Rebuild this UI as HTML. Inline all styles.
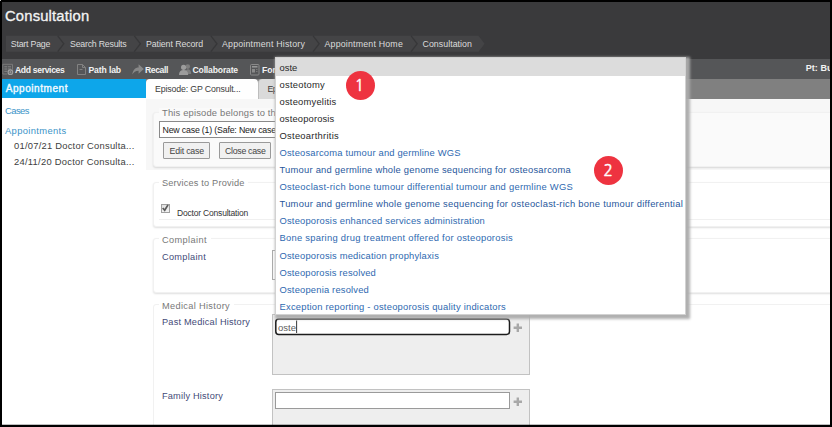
<!DOCTYPE html>
<html><head><meta charset="utf-8"><title>Consultation</title>
<style>
html,body{margin:0;padding:0;background:#000;}
body{width:832px;height:427px;position:relative;overflow:hidden;font-family:"Liberation Sans",sans-serif;}
.a{position:absolute;box-sizing:border-box;}
.t{position:absolute;white-space:nowrap;line-height:1;}
.n{font-family:"NanumGothic","Liberation Sans",sans-serif;font-size:15.400px;color:#fff;-webkit-text-stroke:0.450px #fff;}
</style></head><body>
<!-- page -->
<div class="a" style="left:2px;top:2px;width:828px;height:423px;background:#fff;overflow:hidden"></div>
<div class="a" style="left:2px;top:2px;width:828px;height:56.6px;background:#3a3a3c"></div>
<div class="a" style="left:2px;top:58.6px;width:828px;height:20px;background:#555658"></div>
<div class="a" style="left:146px;top:78.6px;width:684px;height:20px;background:#808080"></div>
<div class="a" style="left:2px;top:78.6px;width:144px;height:19.2px;background:#0da6ea"></div>
<!-- content bg -->
<div class="a" style="left:146px;top:98.6px;width:684px;height:71px;background:#f7f7f7"></div>
<!-- crumbs -->
<svg class="a" style="left:0;top:0" width="832" height="60">
<polygon points="6,35.800 478.500,35.800 484.600,43.750 478.500,51.700 6,51.700" fill="#444446"/>
<g fill="none" stroke="#373739" stroke-width="1.300"><polyline points="57.7,35.800 63.8,43.750 57.7,51.700"/><polyline points="134.3,35.800 140.4,43.750 134.3,51.700"/><polyline points="210.9,35.800 217.0,43.750 210.9,51.700"/><polyline points="313.1,35.800 319.2,43.750 313.1,51.700"/><polyline points="411.1,35.800 417.2,43.750 411.1,51.700"/></g></svg>
<!-- tabs -->
<div class="a" style="left:146px;top:78.6px;width:112px;height:20px;background:#fefefe;border-radius:4px 4px 0 0"></div>
<div class="a" style="left:258px;top:78.6px;width:112px;height:20px;background:#dadada;border-left:1px solid #bdbdbd;border-radius:4px 4px 0 0"></div>
<!-- fieldsets -->
<div class="a" style="left:152.8px;top:112px;width:700px;height:54.5px;border:1px solid #f1f1f1;border-radius:3px;box-shadow:0 1px 2px rgba(0,0,0,.13);background:#fafafa"></div>
<div class="a" style="left:159px;top:108px;width:120px;height:9px;background:#fafafa"></div>
<div class="a" style="left:152.8px;top:182px;width:700px;height:44.5px;border:1px solid #f1f1f1;border-radius:3px;box-shadow:0 1px 2px rgba(0,0,0,.13);background:#fff"></div>
<div class="a" style="left:159px;top:178px;width:89px;height:9px;background:#fff"></div>
<div class="a" style="left:159px;top:219px;width:680px;height:1px;background:#f0f0f0"></div>
<div class="a" style="left:152.8px;top:238px;width:700px;height:54.5px;border:1px solid #f1f1f1;border-radius:3px;box-shadow:0 1px 2px rgba(0,0,0,.13);background:#fff"></div>
<div class="a" style="left:159px;top:234px;width:52px;height:9px;background:#fff"></div>
<div class="a" style="left:152.8px;top:304px;width:700px;height:140px;border:1px solid #f1f1f1;border-radius:3px;background:#fff"></div>
<div class="a" style="left:159px;top:300px;width:75px;height:9px;background:#fff"></div>
<!-- select + buttons -->
<div class="a" style="left:159px;top:121.4px;width:200px;height:16.600px;border:1px solid #8a8a8a;background:#fff"></div>
<div class="a" style="left:163px;top:142.3px;width:46.6px;height:16.7px;border:1px solid #9a9a9a;background:#f1f1f1;border-radius:1px"></div>
<div class="a" style="left:219.2px;top:142.3px;width:51.6px;height:16.7px;border:1px solid #9a9a9a;background:#f1f1f1;border-radius:1px"></div>
<!-- checkbox -->
<div class="a" style="left:160.5px;top:203.6px;width:9.6px;height:9.2px;border:1px solid #a0a0a0;background:linear-gradient(#e2e2e2,#f2f2f2)"></div>
<svg class="a" style="left:160.3px;top:203.5px" width="10" height="10"><path d="M2.700 4 L4.700 6.300 L8 0.900" fill="none" stroke="#5a5a5a" stroke-width="1.700"/></svg>
<!-- complaint textarea -->
<div class="a" style="left:272px;top:250px;width:200px;height:29.600px;border:1px solid #aaa;background:#fff"></div>
<!-- medical history boxes -->
<div class="a" style="left:272px;top:314px;width:258px;height:61px;border:1px solid #c2c2c2;background:#eeeeee"></div>
<svg class="a" style="left:270px;top:314px" width="250" height="26"><rect x="5.800" y="5" width="233.700" height="15.400" rx="3" fill="#fff" stroke="#1c1c1c" stroke-width="1.500"/><rect x="26.200" y="6.500" width="0.900" height="12.500" fill="#222"/></svg>
<div class="a" style="left:272px;top:389px;width:258px;height:60px;border:1px solid #c2c2c2;background:#eeeeee"></div>
<div class="a" style="left:275px;top:392.300px;width:235px;height:16.400px;border:1px solid #9a9a9a;background:#fff"></div>
<svg class="a" style="left:513px;top:323px" width="10" height="10"><path d="M3.6 0.6h2.4v3h3v2.4h-3v3h-2.4v-3h-3v-2.4h3z" fill="#a8a8a8"/></svg>
<svg class="a" style="left:513px;top:397px" width="10" height="10"><path d="M3.6 0.6h2.4v3h3v2.4h-3v3h-2.4v-3h-3v-2.4h3z" fill="#a8a8a8"/></svg>
<!-- toolbar icons -->
<svg class="a" style="left:0;top:58px" width="280" height="22" fill="none" stroke="#8e8e8e" stroke-width="1">
<path d="M2.800 6.300h9.700v5.500 M2.800 6.300v9.700h4.500" stroke="#7a7a7a"/><path d="M4.300 8.800h6.700 M4.300 11h6.700 M4.300 13.300h3.500" stroke="#858585" stroke-dasharray="3 0.700"/>
<circle cx="10.400" cy="14.200" r="2.300" stroke-width="1.100" stroke="#a0a0a0" fill="#606163"/><path d="M9.200 14.200h2.400 M10.400 13v2.400" stroke="#9a9a9a" stroke-width="0.800"/>
<path d="M77.500 6.500h5l3 3v7h-8z M82.500 6.500v3h3 M79.500 11.500h3" stroke="#828282"/>
<path d="M132.300 16.600C132.800 12 135 9.400 138.600 9.400V6.300L143.800 11L138.600 15.700V12.700C135.600 12.700 133.600 14 132.300 16.600Z" fill="#888888" stroke="none"/>
<g stroke="none"><circle cx="187.800" cy="8.600" r="2.300" fill="#7e7e7e"/><path d="M185 16c0-3 1-4.800 3-4.800s3.200 1.800 3.200 4.800z" fill="#7e7e7e"/><circle cx="183.600" cy="9.300" r="2.600" fill="#9c9c9c"/><path d="M179 17c0-3.400 1.600-5 4.600-5s4.600 1.600 4.600 5z" fill="#9c9c9c"/></g>
<rect x="250.500" y="6.500" width="8.500" height="10.500" rx="1" stroke="#8a8a8a"/><path d="M252 8.800h5.500" stroke="#a0a0a0" stroke-width="1.400"/><rect x="252" y="11" width="3" height="3.500" fill="#8a8a8a" stroke="none"/><path d="M256 11.500h1.500 M256 13.500h1.500" stroke="#7a7a7a"/>
</svg>
<span class="t" style="left:5.00px;top:9.47px;font-size:14.80px;color:#f4f4f4;-webkit-text-stroke:0.300px #f4f4f4;letter-spacing:0.170px;">Consultation</span>
<span class="t" style="left:10.80px;top:40.45px;font-size:8.80px;color:#dcdcdc;letter-spacing:-0.218px;">Start Page</span>
<span class="t" style="left:70.00px;top:40.45px;font-size:8.80px;color:#dcdcdc;letter-spacing:-0.233px;">Search Results</span>
<span class="t" style="left:146.00px;top:40.45px;font-size:8.80px;color:#dcdcdc;letter-spacing:-0.086px;">Patient Record</span>
<span class="t" style="left:222.00px;top:40.45px;font-size:8.80px;color:#dcdcdc;letter-spacing:0.199px;">Appointment History</span>
<span class="t" style="left:324.50px;top:40.45px;font-size:8.80px;color:#dcdcdc;letter-spacing:0.199px;">Appointment Home</span>
<span class="t" style="left:422.50px;top:40.45px;font-size:8.80px;color:#dcdcdc;letter-spacing:0.049px;">Consultation</span>
<span class="t" style="left:15.00px;top:65.92px;font-size:8.60px;color:#f2f2f2;font-weight:700;letter-spacing:-0.335px;">Add services</span>
<span class="t" style="left:88.50px;top:65.92px;font-size:8.60px;color:#f2f2f2;font-weight:700;letter-spacing:-0.117px;">Path lab</span>
<span class="t" style="left:145.00px;top:65.92px;font-size:8.60px;color:#f2f2f2;font-weight:700;letter-spacing:-0.388px;">Recall</span>
<span class="t" style="left:192.50px;top:65.92px;font-size:8.60px;color:#f2f2f2;font-weight:700;letter-spacing:-0.162px;">Collaborate</span>
<span class="t" style="left:262.00px;top:65.92px;font-size:8.60px;color:#f2f2f2;font-weight:700;letter-spacing:0.052px;">For</span>
<span class="t" style="left:805.70px;top:64.38px;font-size:9.00px;color:#f2f2f2;font-weight:700;letter-spacing:0.050px;">Pt: Bu</span>
<span class="t" style="left:5.70px;top:84.13px;font-size:10.00px;color:#f0f9fe;-webkit-text-stroke:0.400px #f0f9fe;letter-spacing:0.559px;">Appointment</span>
<span class="t" style="left:5.00px;top:106.34px;font-size:9.40px;color:#3a93c8;letter-spacing:-0.516px;">Cases</span>
<span class="t" style="left:5.00px;top:126.24px;font-size:9.40px;color:#3a93c8;letter-spacing:0.348px;">Appointments</span>
<span class="t" style="left:14.00px;top:141.24px;font-size:9.40px;color:#404040;letter-spacing:0.236px;">01/07/21 Doctor Consulta...</span>
<span class="t" style="left:14.00px;top:157.34px;font-size:9.40px;color:#404040;letter-spacing:0.262px;">24/11/20 Doctor Consulta...</span>
<span class="t" style="left:155.00px;top:85.35px;font-size:8.80px;color:#3c3c3c;letter-spacing:-0.152px;">Episode: GP Consult...</span>
<span class="t" style="left:267.50px;top:85.35px;font-size:8.80px;color:#3c3c3c;letter-spacing:-0.633px;">Ep</span>
<span class="t" style="left:162.00px;top:108.24px;font-size:9.40px;color:#787878;letter-spacing:0.175px;">This episode belongs to th</span>
<span class="t" style="left:162.50px;top:125.55px;font-size:8.80px;color:#1a1a1a;letter-spacing:-0.190px;">New case (1) (Safe: New case</span>
<span class="t" style="left:169.50px;top:146.85px;font-size:8.80px;color:#444;letter-spacing:-0.188px;">Edit case</span>
<span class="t" style="left:225.00px;top:146.85px;font-size:8.80px;color:#444;letter-spacing:-0.303px;">Close case</span>
<span class="t" style="left:162.00px;top:178.61px;font-size:9.20px;color:#787878;letter-spacing:0.176px;">Services to Provide</span>
<span class="t" style="left:177.00px;top:209.10px;font-size:8.50px;color:#333;letter-spacing:-0.192px;">Doctor Consultation</span>
<span class="t" style="left:162.00px;top:235.61px;font-size:9.20px;color:#787878;letter-spacing:0.403px;">Complaint</span>
<span class="t" style="left:162.00px;top:252.61px;font-size:9.20px;color:#434a78;letter-spacing:0.292px;">Complaint</span>
<span class="t" style="left:162.00px;top:301.81px;font-size:9.20px;color:#787878;letter-spacing:0.347px;">Medical History</span>
<span class="t" style="left:162.00px;top:317.51px;font-size:9.20px;color:#434a78;letter-spacing:0.213px;">Past Medical History</span>
<span class="t" style="left:162.00px;top:391.71px;font-size:9.20px;color:#434a78;letter-spacing:0.200px;">Family History</span>
<span class="t" style="left:278.00px;top:322.66px;font-size:9.50px;color:#606060;letter-spacing:0.008px;">oste</span>
<!-- dropdown -->
<div class="a" id="dd" style="left:275px;top:57.3px;width:411px;height:257.500px;background:#fff;border:1px solid #d2d2d2;box-shadow:2px 2px 2.500px 1.800px rgba(172,172,172,.95)"></div>
<div class="a" style="left:276px;top:58.3px;width:409px;height:18px;background:#dcdcdc"></div>
<span class="t" style="left:279.50px;top:63.24px;font-size:9.40px;color:#282828;letter-spacing:-0.009px;">oste</span>
<span class="t" style="left:279.50px;top:80.24px;font-size:9.40px;color:#282828;letter-spacing:0.250px;">osteotomy</span>
<span class="t" style="left:279.50px;top:97.24px;font-size:9.40px;color:#282828;letter-spacing:0.216px;">osteomyelitis</span>
<span class="t" style="left:279.50px;top:114.24px;font-size:9.40px;color:#282828;letter-spacing:0.145px;">osteoporosis</span>
<span class="t" style="left:279.50px;top:131.24px;font-size:9.40px;color:#282828;letter-spacing:0.268px;">Osteoarthritis</span>
<span class="t" style="left:279.50px;top:148.24px;font-size:9.40px;color:#2e69b0;letter-spacing:0.182px;">Osteosarcoma tumour and germline WGS</span>
<span class="t" style="left:279.50px;top:165.24px;font-size:9.40px;color:#27579c;letter-spacing:0.226px;">Tumour and germline whole genome sequencing for osteosarcoma</span>
<span class="t" style="left:279.50px;top:182.24px;font-size:9.40px;color:#2e69b0;letter-spacing:0.257px;">Osteoclast-rich bone tumour differential tumour and germline WGS</span>
<span class="t" style="left:279.50px;top:199.24px;font-size:9.40px;color:#27579c;letter-spacing:0.262px;">Tumour and germline whole genome sequencing for osteoclast-rich bone tumour differential</span>
<span class="t" style="left:279.50px;top:216.24px;font-size:9.40px;color:#2e69b0;letter-spacing:0.189px;">Osteoporosis enhanced services administration</span>
<span class="t" style="left:279.50px;top:233.24px;font-size:9.40px;color:#2e69b0;letter-spacing:0.264px;">Bone sparing drug treatment offered for osteoporosis</span>
<span class="t" style="left:279.50px;top:250.84px;font-size:9.40px;color:#2e69b0;letter-spacing:0.180px;">Osteoporosis medication prophylaxis</span>
<span class="t" style="left:279.50px;top:267.84px;font-size:9.40px;color:#2e69b0;letter-spacing:0.153px;">Osteoporosis resolved</span>
<span class="t" style="left:279.50px;top:284.84px;font-size:9.40px;color:#2e69b0;letter-spacing:0.184px;">Osteopenia resolved</span>
<span class="t" style="left:279.50px;top:301.84px;font-size:9.40px;color:#2e69b0;letter-spacing:0.223px;">Exception reporting - osteoporosis quality indicators</span>
<!-- circles -->
<div class="a" style="left:345.7px;top:70.9px;width:29.4px;height:29.4px;border-radius:50%;background:#ee3340"></div>
<div class="a" style="left:593.5px;top:155.6px;width:29.6px;height:29.6px;border-radius:50%;background:#ee3340"></div>
<span class="t n" style="left:354.800px;top:77.700px;">1</span>
<span class="t n" style="left:603.600px;top:162.500px;">2</span>
<!-- outer black border on top -->
<svg class="a" style="left:0;top:0;pointer-events:none" width="832" height="427"><path d="M0 0H832V427H0Z M2 2V424.750H830V2Z" fill="#000" fill-rule="evenodd"/><rect x="0" y="0" width="1" height="1" fill="#bbb"/></svg>
</body></html>
